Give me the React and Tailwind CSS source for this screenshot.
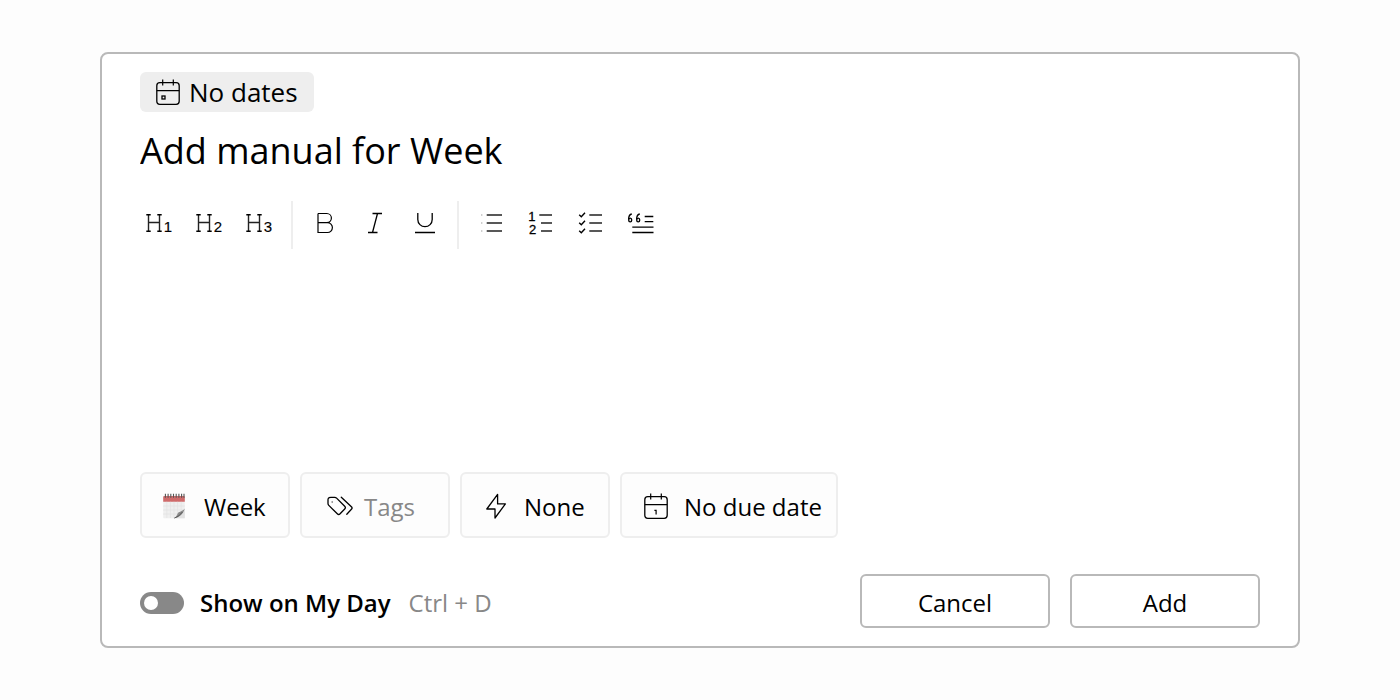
import React from 'react';

function Icon({ size = 36, className = '', children }) {
  return (
    <svg
      width={size}
      height={size}
      viewBox={`0 0 ${size} ${size}`}
      fill="none"
      stroke="currentColor"
      strokeWidth="1.3"
      aria-hidden="true"
      className={`shrink-0 ${className}`}
    >
      {children}
    </svg>
  );
}

function Digit({ x, y, size, weight = '0.3', children }) {
  return (
    <text
      x={x}
      y={y}
      fontSize={size}
      fontFamily="Liberation Sans, Arial, sans-serif"
      fill="currentColor"
      stroke="currentColor"
      strokeWidth={weight}
    >
      {children}
    </text>
  );
}

function Heading({ level }) {
  return (
    <Icon>
      <path d="M7.5 8V24.5M18.5 8V24.5M7.5 15.5H18.5" stroke="#222" strokeWidth="1.4" />
      <path d="M5.3 7.8H9.7M16.3 7.8H20.7M5.3 24.3H9.7M16.3 24.3H20.7" strokeWidth="1.4" />
      <Digit x="22.8" y="24.5" size="15" weight="0.15">{level}</Digit>
    </Icon>
  );
}

const tools = [
  [
    { label: 'Heading 1', icon: <Heading level="1" /> },
    { label: 'Heading 2', icon: <Heading level="2" /> },
    { label: 'Heading 3', icon: <Heading level="3" /> },
  ],
  [
    {
      label: 'Bold',
      icon: (
        <Icon>
          <path d="M11 6.5V25.5H20.5a4.9 4.9 0 0 0 0-9.8H11M11 6.5H19.8a4.6 4.6 0 0 1 0 9.2" strokeWidth="1.2" />
        </Icon>
      ),
    },
    {
      label: 'Italic',
      icon: (
        <Icon>
          <path d="M15.5 6.5H25M11 25.5H20.5M20.5 6.5L15.5 25.5" />
        </Icon>
      ),
    },
    {
      label: 'Underline',
      icon: (
        <Icon>
          <path d="M10.8 6V12.5a7.2 7.2 0 0 0 14.4 0V6M8 25.5H28" strokeWidth="1.3" />
        </Icon>
      ),
    },
  ],
  [
    {
      label: 'Bulleted list',
      icon: (
        <Icon>
          <path d="M13.7 8H29M13.7 16H29M13.7 24H29" stroke="#222" strokeWidth="1.5" />
          <path d="M8.3 8h1M8.3 16h1M8.3 24h1" stroke="#777" strokeWidth="1" />
        </Icon>
      ),
    },
    {
      label: 'Numbered list',
      icon: (
        <Icon>
          <path d="M16.3 8H29M18 16H29M18 24H29" stroke="#222" strokeWidth="1.5" />
          <Digit x="5.2" y="14" size="13">1</Digit>
          <Digit x="5.9" y="27.4" size="13">2</Digit>
        </Icon>
      ),
    },
    {
      label: 'Checklist',
      icon: (
        <Icon>
          <path d="M16.3 8H29M16.3 16H29M16.3 24H29" stroke="#222" strokeWidth="1.5" />
          <path d="M6.2 7.8L8.3 9.8L12 5.8M6.2 15.8L8.3 17.8L12 13.8M6.2 23.8L8.3 25.8L12 21.8" strokeWidth="1.4" />
        </Icon>
      ),
    },
    {
      label: 'Quote',
      icon: (
        <Icon>
          <path d="M21.7 9.5H30.3M21.7 14.7H30.3M9.3 20.2H30.5M9.3 25.5H30.5" />
          <path d="M8.8 7C6.4 7.4 5.6 9.4 5.6 12.6" strokeWidth="1.3" />
          <path d="M16.8 7C14.4 7.4 13.6 9.4 13.6 12.6" strokeWidth="1.3" />
          <ellipse cx="7.2" cy="13" rx="1.5" ry="1.9" strokeWidth="1.4" />
          <ellipse cx="15.2" cy="13" rx="1.5" ry="1.9" strokeWidth="1.4" />
        </Icon>
      ),
    },
  ],
];

function CalendarIcon({ children }) {
  return (
    <Icon size={28}>
      <rect x="2.8" y="4.7" width="22.4" height="21.6" rx="3" />
      <path d="M2.8 12.7H25.2M8.7 1.5V7.5M19.3 1.5V7.5" strokeWidth="1.2" />
      {children}
    </Icon>
  );
}

function SpiralCalendar() {
  return (
    <Icon size={28}>
      <rect x="1.2" y="4" width="21.6" height="22.3" rx="0.8" fill="#efefef" stroke="none" />
      <path d="M1.2 5.2a1.2 1.2 0 0 1 1.2-1.2H21.6a1.2 1.2 0 0 1 1.2 1.2V9.8H1.2Z" fill="#cf6a6a" stroke="none" />
      <path d="M4.8 9.8V26M8.4 9.8V26M12 9.8V26M15.6 9.8V24M19.2 9.8V20M1.2 14H22.8M1.2 18H21M1.2 22H16" stroke="#e2e2e2" strokeWidth="0.7" />
      <path d="M22.8 17C20.5 19.8 17.4 20.4 16.2 21.2C15.4 23.6 13.8 25.4 11.8 26.3H22.8Z" fill="#e2e2e2" stroke="none" />
      <path d="M22.8 16.5C20.5 19.4 17.4 19.8 16 20.8C15.2 23.4 13.6 25.4 11.8 26.3C17 25.6 20.8 23 22.8 16.5Z" fill="#8a8a8a" stroke="none" />
      <path d="M12.4 26C16 24.6 18.4 22.8 20.4 20" stroke="#555" strokeWidth="0.9" />
      <path d="M3.4 1.8V5.8M6.1 1.8V5.8M8.8 1.8V5.8M11.5 1.8V5.8M14.2 1.8V5.8M16.9 1.8V5.8M19.6 1.8V5.8M22 1.8V5.8" stroke="#555" strokeWidth="1.1" />
    </Icon>
  );
}

function Chip({ icon, muted, children }) {
  return (
    <button
      type="button"
      className="flex h-[66px] min-w-[150px] items-center gap-3.5 rounded-md border-2 border-[#eeeeee] bg-[#fdfdfd] pt-0.5 pr-3.5 pl-5 text-2xl"
    >
      {icon}
      <span className={muted ? 'pt-0.5 text-[#888888]' : 'pt-0.5'}>{children}</span>
    </button>
  );
}

export default function App() {
  return (
    <main className="flex min-h-screen bg-[#fdfdfd] px-[100px] py-[52px] font-['Open_Sans',sans-serif] text-black">
      <form
        onSubmit={(e) => e.preventDefault()}
        className="flex flex-1 flex-col rounded-lg border-2 border-[#b9b9b9] bg-white px-[38px] py-[18px]"
      >
        <button
          type="button"
          className="flex h-10 items-center gap-[7px] self-start rounded-md bg-[#eeeeee] pr-4 pl-3.5 text-[26px]"
        >
          <CalendarIcon>
            <rect x="8" y="18" width="3" height="3" />
          </CalendarIcon>
          No dates
        </button>

        <input
          aria-label="Title"
          defaultValue="Add manual for Week"
          className="mt-2.5 h-14 w-full bg-transparent text-4xl outline-none"
        />

        <div role="toolbar" aria-label="Formatting" className="mt-[23px] flex h-12 gap-3.5 pl-px">
          {tools.map((group, i) => (
            <React.Fragment key={i}>
              {i > 0 && <div className="w-0.5 bg-[#eeeeee]" />}
              {group.map((tool) => (
                <button key={tool.label} type="button" aria-label={tool.label} className="h-12 w-9">
                  {tool.icon}
                </button>
              ))}
            </React.Fragment>
          ))}
        </div>

        <textarea aria-label="Notes" className="my-3 flex-1 resize-none bg-transparent text-2xl outline-none" />

        <div className="flex flex-wrap gap-2.5">
          <Chip icon={<SpiralCalendar />}>Week</Chip>
          <Chip
            muted
            icon={
              <Icon size={28} className="overflow-visible text-black">
                <path d="M6.5 6.2L7.1 5.7Q7.9 5.3 8.9 5.3H12.7Q13.8 5.3 14.6 6.1L22.7 14.2Q24.1 15.6 22.7 17L18.1 21.8Q16.7 23.2 15.3 21.8L6.8 13.4Q6 12.6 6 11.5V7.8Q6 6.8 6.5 6.2Z" strokeLinejoin="round" />
                <path d="M19.3 5.2L29.4 14.7Q30.8 16 29.4 17.2L24.8 22.2" strokeLinecap="round" />
                <circle cx="10.2" cy="10" r="0.5" stroke="#777" strokeWidth="1" />
              </Icon>
            }
          >
            Tags
          </Chip>
          <Chip
            icon={
              <Icon size={28}>
                <path d="M15.6 2.4L4.8 17H13V26L23.4 11.9H15.6Z" strokeLinejoin="round" />
              </Icon>
            }
          >
            None
          </Chip>
          <Chip
            icon={
              <CalendarIcon>
                <path d="M12.4 18.4H14.1V22.6" strokeWidth="1.2" />
              </CalendarIcon>
            }
          >
            No due date
          </Chip>
        </div>

        <div className="mt-9 flex flex-wrap items-center justify-between gap-5 text-2xl">
          <div className="flex items-center pt-1">
            <input
              id="my-day"
              type="checkbox"
              role="switch"
              className="flex h-[22px] w-11 appearance-none items-center rounded-full bg-[#888888] px-1 before:size-3.5 before:rounded-full before:bg-white checked:justify-end checked:bg-black"
            />
            <label htmlFor="my-day" className="ml-4 font-semibold">
              Show on My Day
            </label>
            <span className="ml-[18px] text-[#888888]">Ctrl + D</span>
          </div>
          <div className="flex gap-5">
            <button type="button" className="h-[54px] w-[190px] rounded-md border-2 border-[#b9b9b9] pt-1">
              Cancel
            </button>
            <button type="submit" className="h-[54px] w-[190px] rounded-md border-2 border-[#b9b9b9] pt-1">
              Add
            </button>
          </div>
        </div>
      </form>
    </main>
  );
}
